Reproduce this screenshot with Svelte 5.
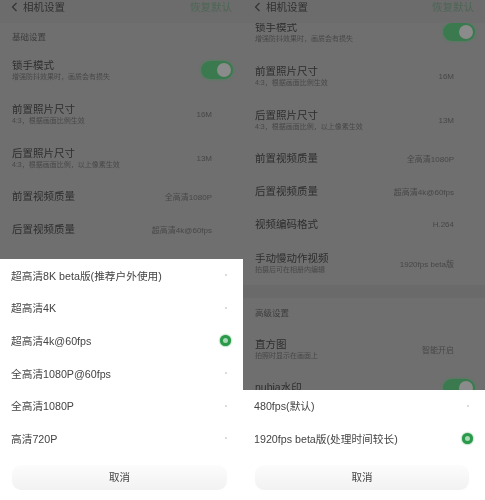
<script>
  const cjk = '"Liberation Sans", "Noto Sans CJK SC", sans-serif';

  const leftRows = [
    { title: "锁手模式", sub: "增强防抖效果时，画质会有损失", toggle: true },
    { title: "前置照片尺寸", sub: "4:3，根据画面比例生效", value: "16M" },
    { title: "后置照片尺寸", sub: "4:3，根据画面比例，以上像素生效", value: "13M" },
    { title: "前置视频质量", value: "全高清1080P" },
    { title: "后置视频质量", value: "超高清4k@60fps" },
  ];

  const rightRows = [
    { title: "锁手模式", sub: "增强防抖效果时，画质会有损失", toggle: true },
    { title: "前置照片尺寸", sub: "4:3，根据画面比例生效", value: "16M" },
    { title: "后置照片尺寸", sub: "4:3，根据画面比例，以上像素生效", value: "13M" },
    { title: "前置视频质量", value: "全高清1080P" },
    { title: "后置视频质量", value: "超高清4k@60fps" },
    { title: "视频编码格式", value: "H.264" },
    { title: "手动慢动作视频", sub: "拍摄后可在相册内编辑", value: "1920fps beta版" },
  ];

  const rightRows2 = [
    { title: "直方图", sub: "拍照时显示在画面上", value: "智能开启" },
    { title: "nubia水印", toggle: true },
  ];

  const leftOptions = [
    { label: "超高清8K beta版(推荐户外使用)" },
    { label: "超高清4K" },
    { label: "超高清4k@60fps", on: true },
    { label: "全高清1080P@60fps" },
    { label: "全高清1080P" },
    { label: "高清720P" },
  ];

  const rightOptions = [
    { label: "480fps(默认)" },
    { label: "1920fps beta版(处理时间较长)", on: true },
  ];
</script>

{#snippet row(r)}
  <div class="row" class:tall={r.sub}>
    <div class="text">
      <div class="title">{r.title}</div>
      {#if r.sub}<div class="sub">{r.sub}</div>{/if}
    </div>
    {#if r.toggle}
      <span class="toggle"><span class="knob"></span></span>
    {:else}
      <span class="value">{r.value}</span>
    {/if}
  </div>
{/snippet}

{#snippet header()}
  <header class="bar">
    <svg class="back" width="7" height="10" viewBox="0 0 7 10" aria-hidden="true">
      <path d="M5.5 1 L1.5 5 L5.5 9" fill="none" stroke="#333" stroke-width="1.2" />
    </svg>
    <span class="bar-title">相机设置</span>
    <span class="bar-action">恢复默认</span>
  </header>
{/snippet}

{#snippet sheet(options)}
  <div class="sheet">
    {#each options as o}
      <div class="option">
        <span>{o.label}</span>
        {#if o.on}
          <span class="radio"></span>
        {:else}
          <span class="dot"></span>
        {/if}
      </div>
    {/each}
    <div class="cancel">取消</div>
  </div>
{/snippet}

<div class="screen" style={`font-family: ${cjk}`}>
  <section class="phone">
    {@render header()}
    <div class="list">
      <div class="section">基础设置</div>
      {#each leftRows as r}{@render row(r)}{/each}
    </div>
    {@render sheet(leftOptions)}
  </section>

  <section class="phone right">
    {@render header()}
    <div class="list scrolled">
      {#each rightRows as r}{@render row(r)}{/each}
      <div class="band"></div>
      <div class="section">高级设置</div>
      {#each rightRows2 as r}{@render row(r)}{/each}
    </div>
    {@render sheet(rightOptions)}
  </section>
</div>

<style>
  :global(body) {
    margin: 0;
    background: #fff;
  }

  .screen {
    display: flex;
    width: 485px;
    height: 500px;
    overflow: hidden;
  }

  .phone {
    position: relative;
    width: 243px;
    height: 500px;
    overflow: hidden;
    background: #6f6f6f;
  }

  .phone.right {
    width: 242px;
  }

  .bar {
    position: relative;
    z-index: 1;
    display: flex;
    align-items: flex-start;
    box-sizing: border-box;
    height: 23px;
    padding: 0 11px;
    background: #6c6c6c;
    line-height: 14px;
    filter: blur(0.6px);
  }

  .back {
    margin: 2px 5px 0 0;
  }

  .bar-title {
    color: #303030;
    font-size: 10.5px;
  }

  .bar-action {
    margin-left: auto;
    color: #4d6656;
    font-size: 10.5px;
  }

  .list {
    filter: blur(0.7px);
  }

  .list.scrolled {
    margin-top: -13px;
  }

  .section {
    height: 25px;
    padding: 8px 12px 0;
    box-sizing: border-box;
    color: #3d3d3d;
    font-size: 8.5px;
    line-height: 12px;
  }

  .band {
    height: 13px;
    background: #6a6a6a;
  }

  .band + .section {
    height: 29px;
    padding-top: 9px;
  }

  .row {
    display: flex;
    align-items: center;
    justify-content: space-between;
    box-sizing: border-box;
    height: 33px;
    padding: 0 10px 0 12px;
  }

  .row.tall {
    height: 44px;
  }

  .title {
    color: #2e2e2e;
    font-size: 10.5px;
    line-height: 13px;
  }

  .sub {
    color: #484848;
    font-size: 7px;
    line-height: 10px;
  }

  .value {
    margin-right: 21px;
    color: #474747;
    font-size: 8px;
  }

  .toggle {
    display: flex;
    align-items: center;
    justify-content: flex-end;
    box-sizing: border-box;
    width: 32px;
    height: 18px;
    padding-right: 2px;
    border-radius: 9px;
    background: #3b7a4f;
    box-shadow: 0 0 3px #3b8a55;
  }

  .knob {
    width: 14px;
    height: 14px;
    border-radius: 50%;
    background: #8b8b8b;
  }

  .sheet {
    position: absolute;
    inset: auto 0 0 0;
    z-index: 2;
    padding-bottom: 10px;
    background: #fff;
  }

  .option {
    display: flex;
    align-items: center;
    justify-content: space-between;
    box-sizing: border-box;
    height: 32.6px;
    padding: 0 12px 1px 11px;
    color: #444;
    font-size: 10.7px;
    filter: blur(0.45px);
  }

  .radio {
    box-sizing: border-box;
    width: 11px;
    height: 11px;
    border: 3.5px solid #2a9a4a;
    border-radius: 50%;
    background: #a8d8b5;
    box-shadow: 0 0 2px #2a9a4a;
  }

  .dot {
    width: 2px;
    height: 2px;
    margin-right: 4px;
    border-radius: 50%;
    background: #d0d0d0;
  }

  .cancel {
    height: 25px;
    margin: 10px 16px 0 12px;
    border-radius: 9px;
    background: linear-gradient(#fcfcfc, #f2f2f2);
    color: #444;
    font-size: 10.5px;
    line-height: 25px;
    text-align: center;
    filter: blur(0.45px);
  }
</style>
